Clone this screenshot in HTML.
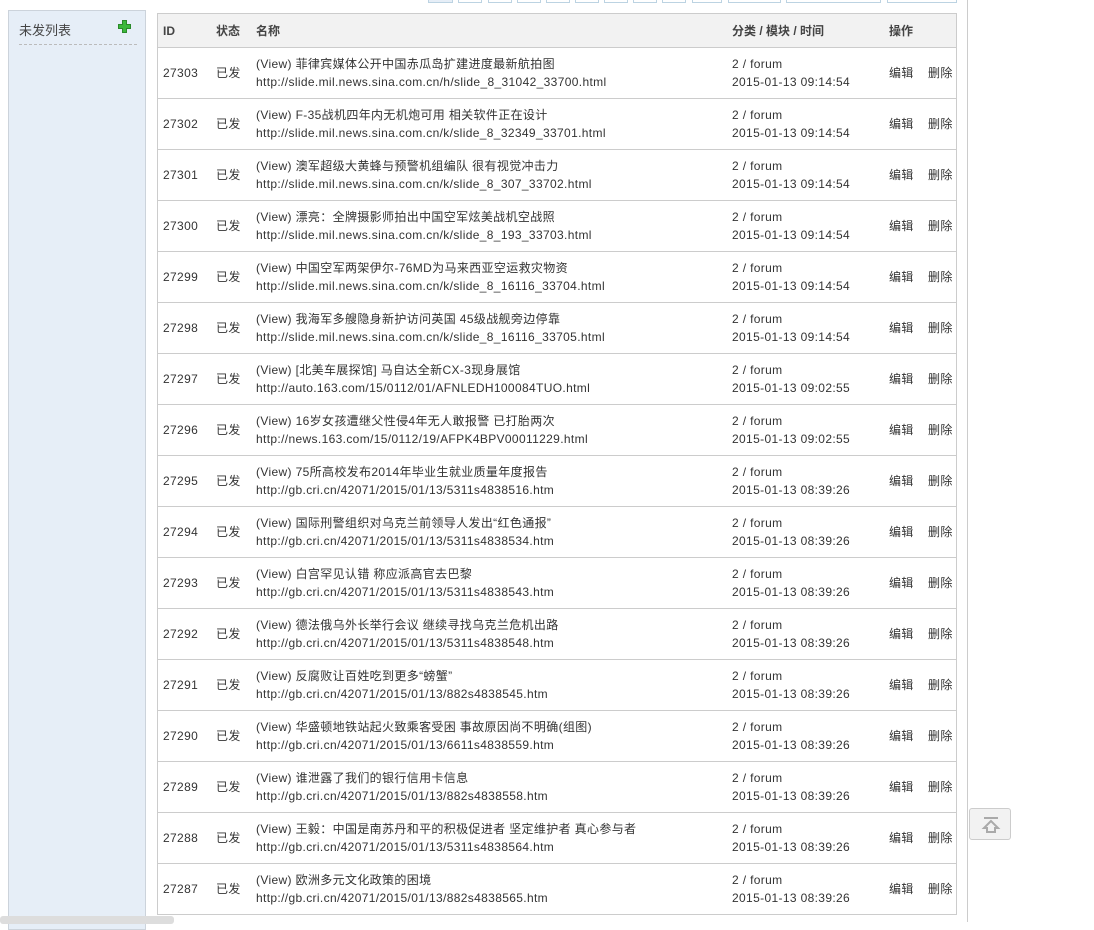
<!DOCTYPE html>
<html><head><meta charset="utf-8"><style>
*{margin:0;padding:0;box-sizing:border-box}
body{width:1094px;height:922px;overflow:hidden;background:#fff;position:relative;font-family:"Liberation Sans","Noto Sans CJK SC",sans-serif;font-size:12px;color:#333}
.side{position:absolute;left:8px;top:10px;width:138px;height:920px;background:#e6eef7;border:1px solid #ccd3db}
.side .t{position:absolute;left:10px;top:9px;font-size:13px;color:#444}
.side .plus{position:absolute;left:109px;top:9px;width:13px;height:13px}
.side .dash{position:absolute;left:10px;top:33px;width:118px;border-top:1px dashed #bbb}
.tbl{position:absolute;left:157px;top:13px;width:800px;border:1px solid #ccc;border-bottom:none}
.hd{height:34px;background:#f2f2f2;border-bottom:1px solid #ccc;position:relative;font-weight:bold;color:#444}
.row{height:51px;border-bottom:1px solid #ccc;position:relative;letter-spacing:0.35px}
.c{position:absolute;white-space:nowrap;line-height:18px}
.hd .c{top:8px}
.row .m{top:16px}
.row .a{top:7px}
.row .b{top:25px}
.pg{position:absolute;top:-18px;height:21px;border:1px solid #bcd3e2;background:#fff}
.vline{position:absolute;left:967px;top:0;height:922px;border-left:1px solid #ccc}
.top{position:absolute;left:969px;top:808px;width:42px;height:32px;border:1px solid #ccc;border-radius:3px;background:#f2f2f2}
.sb{position:absolute;left:0;top:916px;width:174px;height:8px;background:#ddd;border-radius:3px}
</style></head><body>
<div class="pg" style="left:428px;width:25px;background:#e6eef7"></div>
<div class="pg" style="left:458px;width:24px"></div>
<div class="pg" style="left:488px;width:24px"></div>
<div class="pg" style="left:517px;width:24px"></div>
<div class="pg" style="left:546px;width:24px"></div>
<div class="pg" style="left:575px;width:24px"></div>
<div class="pg" style="left:604px;width:24px"></div>
<div class="pg" style="left:633px;width:24px"></div>
<div class="pg" style="left:662px;width:24px"></div>
<div class="pg" style="left:692px;width:30px"></div>
<div class="pg" style="left:728px;width:53px"></div>
<div class="pg" style="left:786px;width:95px"></div>
<div class="pg" style="left:887px;width:70px"></div>
<div class="side"><span class="t">未发列表</span>
<svg class="plus" viewBox="0 0 13 13"><path d="M4.5 0.5h4v4h4v4h-4v4h-4v-4h-4v-4h4z" fill="#3cb83c" stroke="#2a8a2a" stroke-width="1"/></svg>
<div class="dash"></div></div>
<div class="tbl">
<div class="hd"><span class="c" style="left:5px">ID</span><span class="c" style="left:58px">状态</span><span class="c" style="left:98px">名称</span><span class="c" style="left:574px">分类 / 模块 / 时间</span><span class="c" style="left:731px">操作</span></div>
ROWS
</div>
<div class="vline"></div>
<div class="top"><svg width="42" height="32" viewBox="0 0 42 32"><path d="M14 9h14" stroke="#aaa" stroke-width="2"/><path d="M21 12l-7 7h3v4h8v-4h3z" fill="none" stroke="#aaa" stroke-width="2"/></svg></div>
<div class="sb"></div>
<script>
var d=[
["27303","菲律宾媒体公开中国赤瓜岛扩建进度最新航拍图","http://slide.mil.news.sina.com.cn/h/slide_8_31042_33700.html","09:14:54"],
["27302","F-35战机四年内无机炮可用 相关软件正在设计","http://slide.mil.news.sina.com.cn/k/slide_8_32349_33701.html","09:14:54"],
["27301","澳军超级大黄蜂与预警机组编队 很有视觉冲击力","http://slide.mil.news.sina.com.cn/k/slide_8_307_33702.html","09:14:54"],
["27300","漂亮：全牌摄影师拍出中国空军炫美战机空战照","http://slide.mil.news.sina.com.cn/k/slide_8_193_33703.html","09:14:54"],
["27299","中国空军两架伊尔-76MD为马来西亚空运救灾物资","http://slide.mil.news.sina.com.cn/k/slide_8_16116_33704.html","09:14:54"],
["27298","我海军多艘隐身新护访问英国 45级战舰旁边停靠","http://slide.mil.news.sina.com.cn/k/slide_8_16116_33705.html","09:14:54"],
["27297","[北美车展探馆] 马自达全新CX-3现身展馆","http://auto.163.com/15/0112/01/AFNLEDH100084TUO.html","09:02:55"],
["27296","16岁女孩遭继父性侵4年无人敢报警 已打胎两次","http://news.163.com/15/0112/19/AFPK4BPV00011229.html","09:02:55"],
["27295","75所高校发布2014年毕业生就业质量年度报告","http://gb.cri.cn/42071/2015/01/13/5311s4838516.htm","08:39:26"],
["27294","国际刑警组织对乌克兰前领导人发出“红色通报”","http://gb.cri.cn/42071/2015/01/13/5311s4838534.htm","08:39:26"],
["27293","白宫罕见认错 称应派高官去巴黎","http://gb.cri.cn/42071/2015/01/13/5311s4838543.htm","08:39:26"],
["27292","德法俄乌外长举行会议 继续寻找乌克兰危机出路","http://gb.cri.cn/42071/2015/01/13/5311s4838548.htm","08:39:26"],
["27291","反腐败让百姓吃到更多“螃蟹”","http://gb.cri.cn/42071/2015/01/13/882s4838545.htm","08:39:26"],
["27290","华盛顿地铁站起火致乘客受困 事故原因尚不明确(组图)","http://gb.cri.cn/42071/2015/01/13/6611s4838559.htm","08:39:26"],
["27289","谁泄露了我们的银行信用卡信息","http://gb.cri.cn/42071/2015/01/13/882s4838558.htm","08:39:26"],
["27288","王毅：中国是南苏丹和平的积极促进者 坚定维护者 真心参与者","http://gb.cri.cn/42071/2015/01/13/5311s4838564.htm","08:39:26"],
["27287","欧洲多元文化政策的困境","http://gb.cri.cn/42071/2015/01/13/882s4838565.htm","08:39:26"]];
var h="";d.forEach(function(r){h+='<div class="row"><span class="c m" style="left:5px">'+r[0]+'</span><span class="c m" style="left:58px">已发</span><span class="c a" style="left:98px">(View) '+r[1]+'</span><span class="c b" style="left:98px">'+r[2]+'</span><span class="c a" style="left:574px">2 / forum</span><span class="c b" style="left:574px">2015-01-13 '+r[3]+'</span><span class="c m" style="left:731px">编辑</span><span class="c m" style="left:770px">删除</span></div>';});
var t=document.querySelector('.tbl');t.innerHTML=t.innerHTML.replace('ROWS',h);
</script>
</body></html>
